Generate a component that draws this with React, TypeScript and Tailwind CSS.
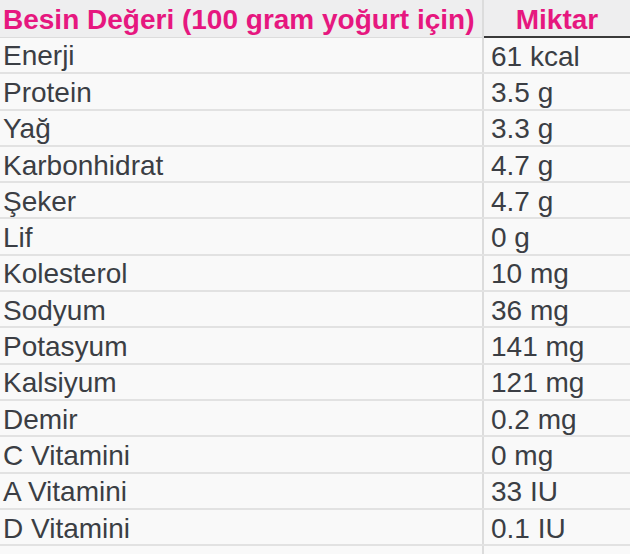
const rows: [string, string][] = [
  ['Enerji', '61 kcal'],
  ['Protein', '3.5 g'],
  ['Yağ', '3.3 g'],
  ['Karbonhidrat', '4.7 g'],
  ['Şeker', '4.7 g'],
  ['Lif', '0 g'],
  ['Kolesterol', '10 mg'],
  ['Sodyum', '36 mg'],
  ['Potasyum', '141 mg'],
  ['Kalsiyum', '121 mg'],
  ['Demir', '0.2 mg'],
  ['C Vitamini', '0 mg'],
  ['A Vitamini', '33 IU'],
  ['D Vitamini', '0.1 IU'],
]

export default function App() {
  return (
    <div className="w-[630px] h-[554px] overflow-hidden bg-[#f9f9f9] [font-family:'Liberation_Sans',Arial,sans-serif] text-[28px] leading-none">
      <table className="w-full border-collapse table-fixed">
        <colgroup>
          <col className="w-[483px]" />
          <col />
        </colgroup>
        <thead>
          <tr className="h-[37px] bg-[#eeeeef]">
            <th className="border-r-2 border-r-[#dcdcdc] border-b border-b-[#dcdcdc] pl-[3px] pt-[3px] text-left font-bold text-[#e6177f] whitespace-nowrap">
              Besin Değeri (100 gram yoğurt için)
            </th>
            <th className="border-b-2 border-b-[#3a3a3a] pt-[3px] text-center font-bold text-[#e6177f]">
              Miktar
            </th>
          </tr>
        </thead>
        <tbody>
          {rows.map(([name, value]) => (
            <tr key={name} className="h-[36.3px]">
              <td className="border-r-2 border-r-[#dcdcdc] border-b-2 border-b-[#e2e2e2] pl-[3px] pt-[3px] text-[#3b3e44]">
                {name}
              </td>
              <td className="border-b-2 border-b-[#e2e2e2] pl-[7px] pt-[3px] text-[#3b3e44]">
                {value}
              </td>
            </tr>
          ))}
          <tr className="h-[36px]">
            <td className="border-r-2 border-r-[#dcdcdc]"></td>
            <td></td>
          </tr>
        </tbody>
      </table>
    </div>
  )
}
